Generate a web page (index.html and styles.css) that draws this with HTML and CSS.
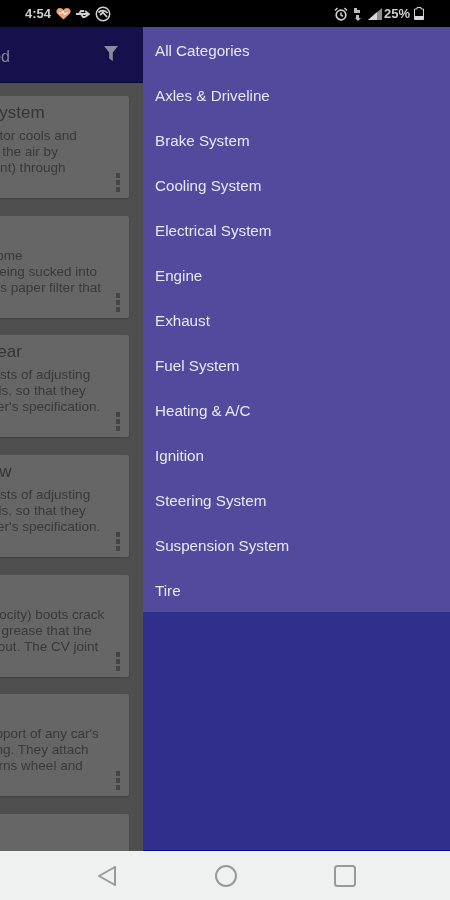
FILE: index.html
```html
<!DOCTYPE html>
<html lang="en">
<head>
<meta charset="utf-8">
<title>Car Maintenance</title>
<link rel="stylesheet" href="styles.css">
</head>
<body>
<div class="app">
  <header class="status">
    <div class="status-left">
      <span class="time">4:54</span>
      <svg class="ic" width="15" height="13" viewBox="0 0 15 13"><path d="M7.500 12.500 1 6.500C-.5 4 1 1 4 1c1.500 0 2.800.8 3.500 2C8.200 1.800 9.500 1 11 1c3 0 4.500 3 3 5.500z" fill="#e8a27c"/><path d="M3 6h3l1-2 1.500 4L10 6h2" fill="none" stroke="#fff" stroke-width="1"/></svg>
      <svg class="ic usb" width="14" height="10" viewBox="0 0 14 10"><path d="M0 5h13M9 2l4 3-4 3M3 5l2-3h3M5 5l2 3h2" fill="none" stroke="#cfcfcf" stroke-width="1.800"/></svg>
      <svg class="ic" width="16" height="16" viewBox="0 0 16 16"><circle cx="8" cy="8" r="6.700" fill="none" stroke="#cfcfcf" stroke-width="1.500"/><path d="M3.500 6.500C6 4 10 4 12.500 7M5 9l3-2.500 4 4.500" fill="none" stroke="#cfcfcf" stroke-width="1.800"/></svg>
    </div>
    <div class="status-right">
      <svg class="ic" width="14" height="14" viewBox="0 0 14 14"><circle cx="7" cy="8" r="4.800" fill="none" stroke="#cfcfcf" stroke-width="1.700"/><path d="M7 5.500V8l2 1.300M1 3.500 3.500 1M13 3.500 10.500 1" fill="none" stroke="#cfcfcf" stroke-width="1.500"/></svg>
      <svg class="ic arrows" width="9" height="14" viewBox="0 0 9 14"><path d="M1 6V1h3v2h3v3zM3 8h3v3h2l-3 3-3-3h1z" fill="#bdbdbd"/></svg>
      <svg class="ic signal" width="14" height="12" viewBox="0 0 14 12"><path d="M0 12 14 0v12z" fill="#8f8f8f"/><path d="M0 12 9 4.300V12z" fill="#d8d8d8"/></svg>
      <span class="pct">25%</span>
      <svg class="ic" width="10" height="13" viewBox="0 0 10 13"><path d="M3 .500h4V2h2.500v10.500H.500V2H3z" fill="none" stroke="#d0d0d0"/><path d="M.500 9h9v3.500h-9z" fill="#d8d8d8"/></svg>
    </div>
  </header>

  <main class="main">
    <section class="content">
      <div class="toolbar">
        <span class="toolbar-title">Maintenance Guide Recommended</span>
        <svg class="filter" width="14" height="15" viewBox="0 0 14 15"><path d="M0 0h14L8.800 6.500V15L5.200 12.500v-6z" fill="#8b8a9c"/></svg>
      </div>
      <div class="list">
        <article class="card">
          <h2 class="card-title">Radiator, Fan, Cooling System</h2>
          <p class="line">The engine coolant in the radiator cools and</p>
          <p class="line">The coolant flow transfers heat the air by</p>
          <p class="line">passing it along a fin (the coolant) through</p>
          <div class="dots"><i></i><i></i><i></i></div>
        </article>
        <article class="card">
          <h2 class="card-title">Air Filter</h2>
          <p class="line">The air your engine needs to come</p>
          <p class="line">The dust, and dirt in the air is being sucked into</p>
          <p class="line">Your motor air flows through this paper filter that</p>
          <div class="dots"><i></i><i></i><i></i></div>
        </article>
        <article class="card">
          <h2 class="card-title">Alignment, and Wheel Rear</h2>
          <p class="line">Full rear wheel alignment consists of adjusting</p>
          <p class="line">the specific angles of the wheels, so that they</p>
          <p class="line">are properly set to the car maker's specification.</p>
          <div class="dots"><i></i><i></i><i></i></div>
        </article>
        <article class="card">
          <h2 class="card-title">Alignments Wheel Review</h2>
          <p class="line">Full rear wheel alignment consists of adjusting</p>
          <p class="line">the specific angles of the wheels, so that they</p>
          <p class="line">are properly set to the car maker's specification.</p>
          <div class="dots"><i></i><i></i><i></i></div>
        </article>
        <article class="card">
          <h2 class="card-title">CV Axle</h2>
          <p class="line">When the two CV (constant velocity) boots crack</p>
          <p class="line">they will quickly leak out all the grease that the</p>
          <p class="line">the joint needs to run right without. The CV joint</p>
          <div class="dots"><i></i><i></i><i></i></div>
        </article>
        <article class="card">
          <h2 class="card-title">Shocks</h2>
          <p class="line">Shocks are a key important support of any car's</p>
          <p class="line">suspension system, and steering. They attach</p>
          <p class="line">to the vehicle frame, and so, turns wheel and</p>
          <div class="dots"><i></i><i></i><i></i></div>
        </article>
        <article class="card">
          <h2 class="card-title">Tire</h2>
        </article>
      </div>
    </section>

    <nav class="drawer">
      <ul class="cats">
        <li>All Categories</li>
        <li>Axles &amp; Driveline</li>
        <li>Brake System</li>
        <li>Cooling System</li>
        <li>Electrical System</li>
        <li>Engine</li>
        <li>Exhaust</li>
        <li>Fuel System</li>
        <li>Heating &amp; A/C</li>
        <li>Ignition</li>
        <li>Steering System</li>
        <li>Suspension System</li>
        <li>Tire</li>
      </ul>
    </nav>
  </main>

  <footer class="navbar">
    <svg width="22" height="24" viewBox="0 0 22 24"><path d="M19 3 3 12l16 9z" fill="none" stroke="#999" stroke-width="2" stroke-linejoin="round"/></svg>
    <svg width="24" height="24" viewBox="0 0 24 24"><circle cx="12" cy="12" r="10" fill="none" stroke="#999" stroke-width="2"/></svg>
    <svg width="24" height="24" viewBox="0 0 24 24"><rect x="2" y="2" width="20" height="20" rx="2.500" fill="none" stroke="#999" stroke-width="2"/></svg>
  </footer>
</div>
</body>
</html>
```

FILE: styles.css
```css
* { box-sizing: border-box; }
html, body { margin: 0; padding: 0; background: #000; }
.app {
  width: 450px;
  height: 900px;
  display: flex;
  flex-direction: column;
  overflow: hidden;
  font-family: "Liberation Sans", Arial, sans-serif;
  filter: blur(0.5px);
}
.status {
  height: 27px;
  flex: none;
  background: #000;
  display: flex;
  justify-content: space-between;
  align-items: center;
  color: #cfcfcf;
  padding: 0 26px 0 25px;
}
.status-left, .status-right { display: flex; align-items: center; }
.time { font-size: 13px; font-weight: 700; margin-right: 5px; }
.usb { margin: 0 5px; }
.arrows { margin: 0 6px 0 5px; }
.signal { margin-right: 2px; }
.pct { font-size: 13px; font-weight: 700; margin-right: 4px; }
.ic { display: block; }

.main { flex: 1; display: flex; min-height: 0; }
.content {
  width: 143px;
  flex: none;
  overflow: hidden;
  background: #4f4f4f;
  display: flex;
  flex-direction: column;
}
.toolbar {
  height: 56px;
  flex: none;
  background: #14114c;
  border-bottom: 1px solid #0b0a33;
  display: flex;
  justify-content: flex-end;
  align-items: center;
  padding: 0 25px 0 0;
  white-space: nowrap;
}
.toolbar-title {
  font-size: 16px;
  color: #86859a;
  margin-right: 94px;
  margin-top: 4px;
}
.filter { flex: none; margin-top: -3px; }
.list { padding-top: 13px; }
.card {
  width: 330px;
  height: 102px;
  margin: 0 0 17.7px -201px;
  padding: 8px 15px 0;
  background: #666;
  box-shadow: 0 1px 2px rgba(0,0,0,.2);
  border-radius: 2px;
  position: relative;
  white-space: nowrap;
  color: #393939;
}
.card-title {
  margin: 0 0 6px;
  font-size: 17px;
  font-weight: 400;
  line-height: 18px;
  color: #363636;
}
.line {
  margin: 0;
  font-size: 13.5px;
  line-height: 16px;
}
.dots {
  position: absolute;
  right: 9px;
  bottom: 6px;
  display: flex;
  flex-direction: column;
  gap: 2px;
}
.dots i { display: block; width: 4.5px; height: 5px; background: #454545; }

.drawer {
  flex: 1;
  background: #312f8c;
  border-bottom: 1px solid #0a0a80;
}
.cats {
  list-style: none;
  margin: 0;
  padding: 0 0 0 12px;
  background: #514a9d;
  height: 585px;
}
.cats li {
  height: 45px;
  line-height: 48px;
  font-size: 15.2px;
  color: #e8e8f2;
}
.navbar {
  height: 49px;
  flex: none;
  background: #eff0f0;
  display: flex;
  justify-content: space-between;
  align-items: center;
  padding: 0 93px 0 96px;
}
```
